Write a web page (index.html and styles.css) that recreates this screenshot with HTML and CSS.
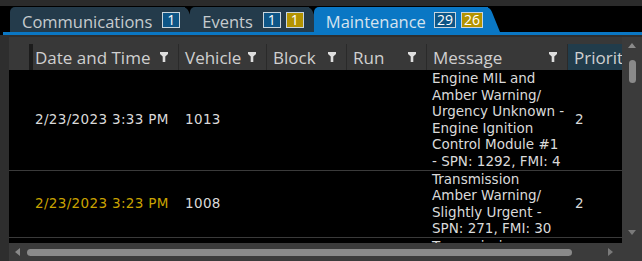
FILE: index.html
```html
<!DOCTYPE html>
<html lang="en">
<head>
  <meta charset="UTF-8" />
  <title>Maintenance</title>
  <link rel="stylesheet" href="styles.css">
</head>
<body>
  <div class="topbar"></div>
  <div class="tabbar">
    <div class="tab"><span class="label">Communications</span><span class="badge">1</span></div>
    <div class="tab"><span class="label">Events</span><span class="badge">1</span><span class="badge gold">1</span></div>
    <div class="tab active"><span class="label">Maintenance</span><span class="badge">29</span><span class="badge gold">26</span></div>
  </div>
  <div class="tabline"></div>

  <div class="panel">
    <div class="main">
      <div class="grid">
        <div class="head">
          <div class="lead"></div>
          <div class="hcell c-date"><span>Date and Time</span>
            <svg class="filter" viewBox="0 0 8 10"><path d="M0 0h8v2L5.3 4.6V10H2.7V4.6L0 2z"/></svg></div>
          <div class="hcell c-veh"><span>Vehicle</span>
            <svg class="filter" viewBox="0 0 8 10"><path d="M0 0h8v2L5.3 4.6V10H2.7V4.6L0 2z"/></svg></div>
          <div class="hcell c-block"><span>Block</span>
            <svg class="filter" viewBox="0 0 8 10"><path d="M0 0h8v2L5.3 4.6V10H2.7V4.6L0 2z"/></svg></div>
          <div class="hcell c-run"><span>Run</span>
            <svg class="filter" viewBox="0 0 8 10"><path d="M0 0h8v2L5.3 4.6V10H2.7V4.6L0 2z"/></svg></div>
          <div class="hcell c-msg"><span>Message</span>
            <svg class="filter" viewBox="0 0 8 10"><path d="M0 0h8v2L5.3 4.6V10H2.7V4.6L0 2z"/></svg></div>
          <div class="hcell c-prio sorted"><span>Priority</span></div>
        </div>

        <div class="rows">
          <div class="row">
            <div class="lead"></div>
            <div class="cell c-date">2/23/2023 3:33 PM</div>
            <div class="cell c-veh">1013</div>
            <div class="cell c-block"></div>
            <div class="cell c-run"></div>
            <div class="cell c-msg">Engine MIL and<br>Amber Warning/<br>Urgency Unknown -<br>Engine Ignition<br>Control Module #1<br>- SPN: 1292, FMI: 4</div>
            <div class="cell c-prio">2</div>
          </div>
          <div class="row">
            <div class="lead"></div>
            <div class="cell c-date warn">2/23/2023 3:23 PM</div>
            <div class="cell c-veh">1008</div>
            <div class="cell c-block"></div>
            <div class="cell c-run"></div>
            <div class="cell c-msg">Transmission<br>Amber Warning/<br>Slightly Urgent -<br>SPN: 271, FMI: 30</div>
            <div class="cell c-prio">2</div>
          </div>
          <div class="row">
            <div class="lead"></div>
            <div class="cell c-date"></div>
            <div class="cell c-veh"></div>
            <div class="cell c-block"></div>
            <div class="cell c-run"></div>
            <div class="cell c-msg">Transmission<br>Amber Warning/</div>
            <div class="cell c-prio"></div>
          </div>
        </div>
      </div>

      <div class="vscroll">
        <span class="arrow up"></span>
        <span class="vthumb"></span>
        <span class="arrow down"></span>
      </div>
    </div>

    <div class="hscroll">
      <span class="arrow left"></span>
      <span class="hthumb"></span>
      <span class="arrow right"></span>
    </div>
  </div>
</body>
</html>
```

FILE: styles.css
```css
body {
  margin: 0;
  width: 642px;
  height: 261px;
  overflow: hidden;
  background-color: #000;
  font-family: "DejaVu Sans", sans-serif;
}

.topbar {
  height: 6px;
  background-color: #2b2b2b;
}

/* tabs */

.tabbar {
  height: 26px;
  display: flex;
  align-items: flex-end;
  padding-left: 10px;
}

.tab {
  position: relative;
  z-index: 0;
  height: 25px;
  display: flex;
  align-items: center;
  gap: 5px;
  padding: 0 5px 0 12px;
  margin-right: 5px;
  background-color: #243b4b;
  color: #c6cbce;
  font-family: "Open Sans", sans-serif;
  font-size: 16.5px;
  border-radius: 5px 0 0 0;
}

.tab::after {
  content: "";
  position: absolute;
  z-index: -1;
  top: 0;
  right: -12px;
  width: 14px;
  height: 100%;
  background-color: inherit;
  border-radius: 0 5px 0 0;
  transform: skewX(22deg);
  transform-origin: bottom left;
}

.tab.active {
  background-color: #0a77c4;
  color: #d5e3ee;
}

.label {
  padding-top: 4px;
  margin-right: 5px;
}

.tab.active .label {
  margin-right: 3px;
}

.badge {
  min-width: 14px;
  height: 14px;
  padding: 0 1px;
  border: 1px solid #c9d5dd;
  background-color: #0e5687;
  color: #fff;
  font-size: 14px;
  line-height: 14px;
  text-align: center;
}

.badge.gold {
  background-color: #b39300;
}

.tab.active .badge {
  padding: 0 2px;
}

.tabline {
  height: 3px;
  margin-left: 3px;
  background-color: #0a77c4;
}

/* grid panel */

.panel {
  height: 226px;
  display: flex;
  flex-direction: column;
  padding-left: 9px;
  background-color: #2e2e2e;
}

.main {
  height: 208px;
  display: flex;
  padding-top: 2px;
  box-sizing: border-box;
}

.grid {
  flex: 1;
  overflow: hidden;
  display: flex;
  flex-direction: column;
  background-color: #000;
}

.head {
  flex: none;
  height: 26px;
  display: flex;
  padding-top: 7px;
  background-color: #383838;
  color: #d0d0d0;
  font-family: "Open Sans", sans-serif;
  font-size: 17px;
  white-space: nowrap;
}

.lead {
  flex: none;
  width: 20px;
}

.c-date { width: 149px; }
.c-veh { width: 88px; }
.c-block { width: 80px; }
.c-run { width: 80px; }
.c-msg { width: 141px; }
.c-prio { width: 80px; }

.hcell {
  flex: none;
  box-sizing: border-box;
  display: flex;
  align-items: center;
  justify-content: space-between;
  padding: 0 10px 0 6px;
  border-left: 1px solid #2a2a2a;
}

.hcell.c-date {
  padding-left: 2px;
  border-left: 4px solid #1c1c1c;
}

.hcell.sorted {
  background-color: #213c4b;
}

.filter {
  width: 8px;
  height: 10px;
  fill: #dedede;
}

.rows {
  flex: 1;
  overflow: hidden;
}

.row {
  display: flex;
  align-items: center;
  border-bottom: 1px solid #3a3a3a;
}

.cell {
  flex: none;
  box-sizing: border-box;
  padding-left: 6px;
  color: #dadada;
  font-size: 13.5px;
  line-height: 16.6px;
  white-space: nowrap;
}

.cell.c-date,
.cell.c-veh {
  letter-spacing: 0.35px;
}

.cell.c-veh {
  padding-left: 7px;
}

.cell.c-prio {
  padding-left: 8px;
}

.warn {
  color: #c9a300;
}

/* scrollbars */

.vscroll {
  flex: none;
  width: 20px;
  display: flex;
  flex-direction: column;
  align-items: center;
  padding: 6px 0 8px;
  box-sizing: border-box;
  background-color: #3b3b3b;
}

.vthumb {
  width: 7px;
  height: 23px;
  margin-top: 12px;
  border-radius: 4px;
  background-color: #8a8a8a;
}

.arrow {
  width: 0;
  height: 0;
  border: 4px solid transparent;
}

.arrow.up {
  border-top: none;
  border-bottom: 5px solid #8a8a8a;
}

.arrow.down {
  margin-top: auto;
  border-bottom: none;
  border-top: 5px solid #7a7a7a;
}

.hscroll {
  flex: 1;
  display: flex;
  align-items: center;
  padding: 0 29px 0 6px;
  background-color: #3b3b3b;
}

.arrow.left {
  border-left: none;
  border-right: 5px solid #8a8a8a;
}

.arrow.right {
  margin-left: auto;
  border-right: none;
  border-left: 5px solid #7a7a7a;
}

.hthumb {
  width: 545px;
  height: 7px;
  margin-left: 7px;
  border-radius: 4px;
  background-color: #8a8a8a;
}
```
